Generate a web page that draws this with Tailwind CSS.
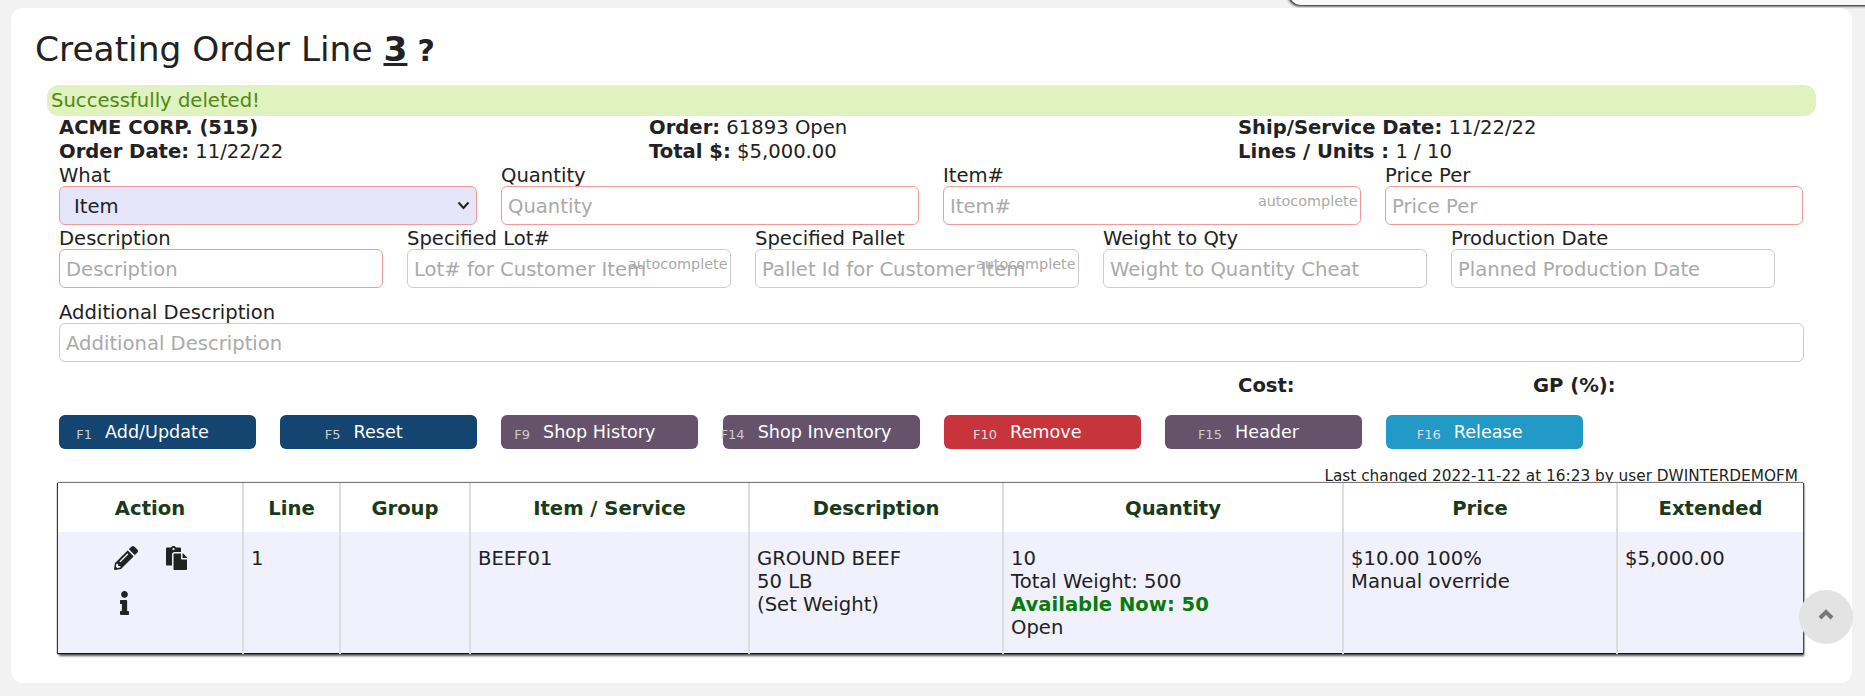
<!DOCTYPE html>
<html lang="en">
<head>
  <meta charset="UTF-8" />
  <title>Creating Order Line</title>
  <script src="https://cdn.jsdelivr.net/npm/@tailwindcss/browser@4"></script>
</head>
<body class="bg-[#f2f2f2] text-[#222] font-['DejaVu_Sans',sans-serif] text-[19.6px] leading-[23px] h-[696px] overflow-hidden relative">

  <!-- corner of the floating panel above the page -->
  <div class="absolute top-[-20px] left-[1289px] w-[600px] h-[25px] bg-[#f8f8f8] rounded-bl-xl shadow-[-1px_1px_3px_#000]"></div>

  <div class="absolute top-[8px] left-[11px] w-[1841px] h-[675px] bg-white rounded-xl">
    <h1 class="pl-[24px] pt-[17px] h-[77px] text-[34.4px] leading-[48px] text-[#222]">
      Creating Order Line <b class="underline">3</b> <b class="text-[30px] -ml-[1px]">?</b>
    </h1>

    <div class="ml-[36px] w-[1769px] h-[31px] leading-[31px] pl-[4px] bg-[#dff2bf] text-[#4f8a10] rounded-xl">Successfully deleted!</div>

    <div class="ml-[48px] w-[1745px]">
      <!-- order summary -->
      <div class="grid grid-cols-[590px_589px_1fr] leading-[23.5px]">
        <div><b>ACME CORP. (515)</b><br><b>Order Date:</b> 11/22/22</div>
        <div><b>Order:</b> 61893 Open<br><b>Total $:</b> $5,000.00</div>
        <div><b>Ship/Service Date:</b> 11/22/22<br><b>Lines / Units :</b> 1 / 10</div>
      </div>

      <!-- first row -->
      <div class="grid grid-cols-[repeat(4,417.5px)] gap-x-[24.5px]">
        <div>
          <label class="block h-[23px] pt-[1px]">What</label>
          <div class="relative">
            <select class="appearance-none block w-full h-[39px] pl-[14px] pt-[2px] bg-[#e6e6fa] border border-[#f09a9a] rounded-md"><option>Item</option></select>
            <svg class="absolute right-[7px] top-[15px] w-[13px] h-[9px]" viewBox="0 0 13 9"><path d="M1.5 1.5l5 5.5 5-5.5" fill="none" stroke="#222" stroke-width="2"/></svg>
          </div>
        </div>
        <div>
          <label class="block h-[23px] pt-[1px]">Quantity</label>
          <input placeholder="Quantity" class="block w-full h-[39px] px-[6px] pt-[2px] border border-[#f09a9a] rounded-md placeholder:text-[#aaa]">
        </div>
        <div>
          <label class="block h-[23px] pt-[1px]">Item#</label>
          <div class="relative">
            <input placeholder="Item#" class="block w-full h-[39px] px-[6px] pt-[2px] border border-[#f09a9a] rounded-md placeholder:text-[#aaa]">
            <span class="absolute right-[3px] top-[4px] text-[14.4px] text-[#aaa]">autocomplete</span>
          </div>
        </div>
        <div>
          <label class="block h-[23px] pt-[1px]">Price Per</label>
          <input placeholder="Price Per" class="block w-full h-[39px] px-[6px] pt-[2px] border border-[#f09a9a] rounded-md placeholder:text-[#aaa]">
        </div>
      </div>

      <!-- second row -->
      <div class="grid grid-cols-[repeat(5,323.5px)] gap-x-[24.5px] mt-[1px]">
        <div>
          <label class="block h-[23px] pt-[1px]">Description</label>
          <input placeholder="Description" class="block w-full h-[39px] px-[6px] pt-[2px] border border-[#f09a9a] rounded-md placeholder:text-[#aaa]">
        </div>
        <div>
          <label class="block h-[23px] pt-[1px]">Specified Lot#</label>
          <div class="relative">
            <input placeholder="Lot# for Customer Item" class="block w-full h-[39px] px-[6px] pt-[2px] border border-[#ccc] rounded-md placeholder:text-[#aaa]">
            <span class="absolute right-[3px] top-[4px] text-[14.4px] text-[#aaa]">autocomplete</span>
          </div>
        </div>
        <div>
          <label class="block h-[23px] pt-[1px]">Specified Pallet</label>
          <div class="relative">
            <input placeholder="Pallet Id for Customer Item" class="block w-full h-[39px] px-[6px] pt-[2px] border border-[#ccc] rounded-md placeholder:text-[#aaa]">
            <span class="absolute right-[3px] top-[4px] text-[14.4px] text-[#aaa]">autocomplete</span>
          </div>
        </div>
        <div>
          <label class="block h-[23px] pt-[1px]">Weight to Qty</label>
          <input placeholder="Weight to Quantity Cheat" class="block w-full h-[39px] px-[6px] pt-[2px] border border-[#ccc] rounded-md placeholder:text-[#aaa]">
        </div>
        <div>
          <label class="block h-[23px] pt-[1px]">Production Date</label>
          <input placeholder="Planned Production Date" class="block w-full h-[39px] px-[6px] pt-[2px] border border-[#ccc] rounded-md placeholder:text-[#aaa]">
        </div>
      </div>

      <div class="mt-[12px]">
        <label class="block h-[23px] pt-[1px]">Additional Description</label>
        <input placeholder="Additional Description" class="block w-full h-[39px] px-[6px] pt-[2px] border border-[#ccc] rounded-md placeholder:text-[#aaa]">
      </div>

      <div class="grid grid-cols-[1179px_295px_1fr] mt-[12px] font-bold">
        <span></span><span>Cost:</span><span>GP (%):</span>
      </div>

      <!-- function key buttons -->
      <div class="grid grid-cols-[repeat(8,197px)] gap-x-[24.2px] mt-[18px] text-[17.6px] text-white">
        <button class="flex items-center justify-center gap-[13px] h-[34px] pt-[1px] pr-[30px] whitespace-nowrap rounded-md bg-[#144570]"><span class="text-[13px] text-[#ccc] pt-1">F1</span>Add/Update</button>
        <button class="flex items-center justify-center gap-[13px] h-[34px] pt-[1px] pr-[30px] whitespace-nowrap rounded-md bg-[#144570]"><span class="text-[13px] text-[#ccc] pt-1">F5</span>Reset</button>
        <button class="flex items-center justify-center gap-[13px] h-[34px] pt-[1px] pr-[30px] whitespace-nowrap rounded-md bg-[#67526b]"><span class="text-[13px] text-[#ccc] pt-1">F9</span>Shop History</button>
        <button class="flex items-center justify-center gap-[13px] h-[34px] pt-[1px] pr-[30px] whitespace-nowrap rounded-md bg-[#67526b]"><span class="text-[13px] text-[#ccc] pt-1">F14</span>Shop Inventory</button>
        <button class="flex items-center justify-center gap-[13px] h-[34px] pt-[1px] pr-[30px] whitespace-nowrap rounded-md bg-[#c7343c]"><span class="text-[13px] text-[#ddd] pt-1">F10</span>Remove</button>
        <button class="flex items-center justify-center gap-[13px] h-[34px] pt-[1px] pr-[30px] whitespace-nowrap rounded-md bg-[#67526b]"><span class="text-[13px] text-[#ccc] pt-1">F15</span>Header</button>
        <button class="flex items-center justify-center gap-[13px] h-[34px] pt-[1px] pr-[30px] whitespace-nowrap rounded-md bg-[#229ac8]"><span class="text-[13px] text-[#ddd] pt-1">F16</span>Release</button>
      </div>

      <div class="mt-[18px] h-[16px] leading-[19px] pr-[6px] text-right text-[15.3px]">Last changed 2022-11-22 at 16:23 by user DWINTERDEMOFM</div>

      <!-- order lines -->
      <table class="relative table-fixed w-[1745px] -ml-[1px] border-collapse bg-white shadow-[1px_2px_2px_#555,-1px_0_1px_#333,1px_0_1px_#333,0_-1px_1px_#999]">
        <colgroup>
          <col class="w-[185px]"><col class="w-[97px]"><col class="w-[130px]"><col class="w-[279px]">
          <col class="w-[254px]"><col class="w-[340px]"><col class="w-[274px]"><col class="w-[186px]">
        </colgroup>
        <thead class="text-[#1a3a1a]">
          <tr class="h-[49px]">
            <th class="pt-[1px] border-r-2 border-[#ddd]">Action</th>
            <th class="pt-[1px] border-r-2 border-[#ddd]">Line</th>
            <th class="pt-[1px] border-r-2 border-[#ddd]">Group</th>
            <th class="pt-[1px] border-r-2 border-[#ddd]">Item / Service</th>
            <th class="pt-[1px] border-r-2 border-[#ddd]">Description</th>
            <th class="pt-[1px] border-r-2 border-[#ddd]">Quantity</th>
            <th class="pt-[1px] border-r-2 border-[#ddd]">Price</th>
            <th class="pt-[1px]">Extended</th>
          </tr>
        </thead>
        <tbody class="bg-[#f1f1fe]">
          <tr class="h-[121px] align-top">
            <td class="border-r-2 border-b border-b-[#111] border-[#ddd] pt-[14px] pl-[40px]">
              <div class="grid grid-cols-[52px_52px] auto-rows-[45px] justify-items-center">
                <svg class="ml-[3px] w-[24px] h-[24px] fill-[#222]" viewBox="0 0 512 512"><path d="M497.9 142.1l-46.1 46.1c-4.7 4.7-12.3 4.7-17 0l-111-111c-4.7-4.7-4.7-12.3 0-17l46.1-46.1c18.7-18.7 49.1-18.7 67.9 0l60.1 60.1c18.8 18.7 18.8 49.1 0 67.9zM284.2 99.8L21.6 362.4.4 483.9c-2.9 16.4 11.4 30.6 27.8 27.8l121.5-21.3 262.6-262.6c4.7-4.7 4.7-12.3 0-17l-111-111c-4.8-4.7-12.4-4.7-17.1 0zM124.1 339.9c-5.5-5.5-5.5-14.3 0-19.8l154-154c5.5-5.5 14.3-5.5 19.8 0s5.5 14.3 0 19.8l-154 154c-5.5 5.5-14.3 5.5-19.8 0zM88 424h48v36.3l-64.5 11.3-31.1-31.1L51.7 376H88v48z"/></svg>
                <svg class="w-[21px] h-[24px] fill-[#222]" viewBox="0 0 448 512"><path d="M128 184c0-30.879 25.122-56 56-56h136V56c0-13.255-10.745-24-24-24h-80.61C204.306 12.89 183.637 0 160 0s-44.306 12.89-55.39 32H24C10.745 32 0 42.745 0 56v336c0 13.255 10.745 24 24 24h104V184zm32-144c13.255 0 24 10.745 24 24s-10.745 24-24 24-24-10.745-24-24 10.745-24 24-24zm184 248h104v200c0 13.255-10.745 24-24 24H184c-13.255 0-24-10.745-24-24V184c0-13.255 10.745-24 24-24h136v104c0 13.2 10.8 24 24 24zm104-38.059V256h-96v-96h6.059a24 24 0 0 1 16.97 7.029l65.941 65.941a24.002 24.002 0 0 1 7.03 16.971z"/></svg>
                <svg class="w-[9px] h-[24px] fill-[#222]" viewBox="0 0 192 512"><path d="M20 424.229h20V279.771H20c-11.046 0-20-8.954-20-20V212c0-11.046 8.954-20 20-20h112c11.046 0 20 8.954 20 20v212.229h20c11.046 0 20 8.954 20 20V492c0 11.046-8.954 20-20 20H20c-11.046 0-20-8.954-20-20v-47.771c0-11.046 8.954-20 20-20zM96 0C56.235 0 24 32.235 24 72s32.235 72 72 72 72-32.235 72-72S135.764 0 96 0z"/></svg>
              </div>
            </td>
            <td class="border-r-2 border-b border-b-[#111] border-[#ddd] pt-[15px] pl-[7px]">1</td>
            <td class="border-r-2 border-b border-b-[#111] border-[#ddd]"></td>
            <td class="border-r-2 border-b border-b-[#111] border-[#ddd] pt-[15px] pl-[7px]">BEEF01</td>
            <td class="border-r-2 border-b border-b-[#111] border-[#ddd] pt-[15px] pl-[7px]">GROUND BEEF<br>50 LB<br>(Set Weight)</td>
            <td class="border-r-2 border-b border-b-[#111] border-[#ddd] pt-[15px] pl-[7px]">10<br>Total Weight: 500<br><b class="text-[#0a7a0a]">Available Now: 50</b><br>Open</td>
            <td class="border-r-2 border-b border-b-[#111] border-[#ddd] pt-[15px] pl-[7px]">$10.00 100%<br>Manual override</td>
            <td class="border-b border-b-[#111] pt-[15px] pl-[7px]">$5,000.00</td>
          </tr>
        </tbody>
      </table>
    </div>
  </div>

  <!-- scroll to top -->
  <div class="absolute left-[1799px] top-[590px] w-[54px] h-[54px] rounded-full bg-[#e3e3e3] flex items-center justify-center">
    <svg class="mb-[6px] w-[16px] h-[11px]" viewBox="0 0 16 11"><path d="M2 9l6-6 6 6" fill="none" stroke="#777" stroke-width="4"/></svg>
  </div>
</body>
</html>
